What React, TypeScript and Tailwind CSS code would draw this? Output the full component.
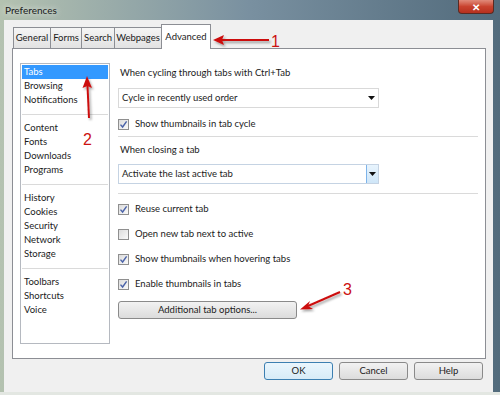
import { ReactNode } from 'react';

const LIST_GROUPS = [
  ['Tabs', 'Browsing', 'Notifications'],
  ['Content', 'Fonts', 'Downloads', 'Programs'],
  ['History', 'Cookies', 'Security', 'Network', 'Storage'],
  ['Toolbars', 'Shortcuts', 'Voice'],
];

const TABS = [
  { label: 'General', w: 'w-[38px]' },
  { label: 'Forms', w: 'w-[32px]' },
  { label: 'Search', w: 'w-[34px]' },
  { label: 'Webpages', w: 'w-[48px]' },
];

function Checkbox({ checked, children, className = '' }: { checked: boolean; children: ReactNode; className?: string }) {
  return (
    <div className={`flex h-[14px] items-center ${className}`}>
      <span className="flex h-[11px] w-[11px] items-center justify-center border border-[#8f8f8f] bg-gradient-to-br from-[#dcdcdc] to-[#fafafa]">
        {checked && (
          <svg width="9" height="9" viewBox="0 0 9 9">
            <path d="M1.5 4.6 L3.6 7 L7.6 1.4" fill="none" stroke="#4a62a8" strokeWidth="1.4" />
          </svg>
        )}
      </span>
      <span className="ml-[6px]">{children}</span>
    </div>
  );
}

function Arrow() {
  return (
    <svg width="7" height="4" viewBox="0 0 7 4">
      <path d="M0 0 H7 L3.5 4 Z" fill="#111" />
    </svg>
  );
}

function PushButton({ label, primary = false, className = '' }: { label: string; primary?: boolean; className?: string }) {
  return (
    <div
      className={`flex h-[18px] items-center justify-center rounded-[3px] border bg-gradient-to-b ${
        primary ? 'border-[#3c7fb1] from-[#eaf6fd] to-[#d7ebf7]' : 'border-[#8a8a8a] from-[#f2f2f2] to-[#dcdcdc]'
      } ${className}`}
    >
      {label}
    </div>
  );
}

export default function App() {
  return (
    <div className="relative h-[395px] w-[500px] overflow-hidden bg-gradient-to-r from-[#b4c2b0] via-[#7990a0] to-[#526b7c] font-['Lato',sans-serif] text-[9.5px] text-[#1b1b1b]">
      <div className="flex h-[20px] items-start justify-between pl-[5px] pr-[6px]">
        <span className="mt-[3px] text-[10px] text-[#1a1a1a] [text-shadow:0_0_6px_#fff]">Preferences</span>
        <div className="flex h-[14px] w-[36px] items-center justify-center rounded-b-[4px] border border-t-0 border-[#5a2a22] bg-gradient-to-b from-[#e08a7a] via-[#c9432f] to-[#b6301e]">
          <span className="text-[10px] font-bold leading-none text-white">✕</span>
        </div>
      </div>

      <div className="ml-[4px] flex h-[372px] w-[489px] flex-col bg-[#f0f0f0]">
        <div className="flex h-[28px] items-end pl-[9px] pt-[4px]">
          {TABS.map((t) => (
            <div
              key={t.label}
              className={`${t.w} -mr-px flex h-[21px] items-center justify-center border border-b-0 border-[#8c8e94] bg-gradient-to-b from-[#f5f5f5] to-[#e2e2e2]`}
            >
              {t.label}
            </div>
          ))}
          <div className="relative z-10 -mb-px flex h-[25px] w-[50px] items-center justify-center border border-b-0 border-[#8c8e94] bg-white">
            Advanced
          </div>
        </div>

        <div className="ml-[8px] flex h-[311px] w-[474px] border border-[#8c8e94] bg-white pl-[7px] pt-[14px]">
          <div className="h-[281px] w-[90px] border border-[#b5b9c0] p-px">
            {LIST_GROUPS.map((group, gi) => (
              <div key={gi}>
                {gi > 0 && (
                  <div className="flex h-[14px] items-center">
                    <div className="h-px w-full bg-[#dadada]" />
                  </div>
                )}
                {group.map((item) => (
                  <div
                    key={item}
                    className={`flex h-[14px] items-center pl-[2px] ${item === 'Tabs' ? 'bg-[#3399ff] text-white' : ''}`}
                  >
                    {item}
                  </div>
                ))}
              </div>
            ))}
          </div>

          <div className="ml-[8px] flex w-[360px] flex-col">
            <div className="flex h-[20px] items-center pl-[2px]">When cycling through tabs with Ctrl+Tab</div>
            <div className="mt-[5px] flex h-[20px] w-[261px] items-center justify-between border border-[#d9d9d9] pl-[3px] pr-[3px]">
              <span>Cycle in recently used order</span>
              <Arrow />
            </div>
            <Checkbox checked className="mt-[9px]">
              Show thumbnails in tab cycle
            </Checkbox>
            <div className="mt-[5px] h-px w-full bg-[#dadada]" />
            <div className="mt-[6px] flex h-[14px] items-center pl-[2px]">When closing a tab</div>
            <div className="mt-[7px] flex h-[20px] w-[261px] items-stretch border border-[#c5d3e3]">
              <span className="flex flex-1 items-center pl-[3px]">Activate the last active tab</span>
              <span className="flex w-[12px] items-center justify-center border-l border-[#7eb4ea] bg-gradient-to-b from-[#e8f4fd] to-[#cfe6f8]">
                <Arrow />
              </span>
            </div>
            <div className="mt-[9px] h-px w-full bg-[#dadada]" />
            <Checkbox checked className="mt-[8px]">
              Reuse current tab
            </Checkbox>
            <Checkbox checked={false} className="mt-[11px]">
              Open new tab next to active
            </Checkbox>
            <Checkbox checked className="mt-[11px]">
              Show thumbnails when hovering tabs
            </Checkbox>
            <Checkbox checked className="mt-[11px]">
              Enable thumbnails in tabs
            </Checkbox>
            <PushButton label="Additional tab options..." className="mt-[10px] w-[179px]" />
          </div>
        </div>

        <div className="mt-[3px] flex justify-end gap-[6px] pr-[10px]">
          <PushButton label="OK" primary className="w-[69px]" />
          <PushButton label="Cancel" className="w-[69px]" />
          <PushButton label="Help" className="w-[69px]" />
        </div>
      </div>
      <div className="h-[3px] bg-[#e3e7e2]" />

      {/* annotation arrows drawn over the screenshot */}
      <svg className="pointer-events-none absolute left-0 top-0" width="500" height="395">
        <defs>
          <filter id="sh" x="-20%" y="-20%" width="140%" height="140%">
            <feDropShadow dx="1.5" dy="2" stdDeviation="1" floodColor="#000" floodOpacity="0.35" />
          </filter>
        </defs>
        <g filter="url(#sh)" stroke="#cc1111" fill="#cc1111">
          <line x1="269" y1="40" x2="222" y2="40" strokeWidth="2" />
          <path d="M213 40 L224 35 L222 40 L224 45 Z" stroke="none" />
          <line x1="89" y1="118" x2="87.5" y2="86" strokeWidth="2" />
          <path d="M87 76 L92 88 L87.5 86 L82.5 88 Z" stroke="none" />
          <line x1="340" y1="292" x2="308" y2="306" strokeWidth="2" />
          <path d="M300 309.5 L310 301 L308 306 L313 309 Z" stroke="none" />
        </g>
        <g fill="#cc1111" fontFamily="'Liberation Sans', Arial, sans-serif" fontSize="16">
          <text x="271" y="47">1</text>
          <text x="83" y="145">2</text>
          <text x="343" y="295">3</text>
        </g>
      </svg>
    </div>
  );
}
